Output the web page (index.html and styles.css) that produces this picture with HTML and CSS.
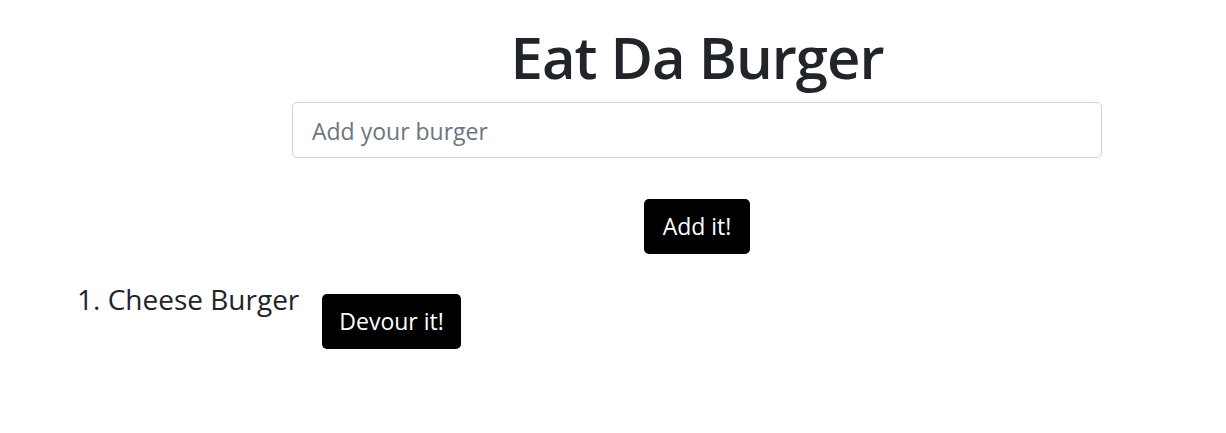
FILE: index.html
```html
<!DOCTYPE html>
<html lang="en">
<head>
<meta charset="utf-8">
<title>Eat Da Burger</title>
<link rel="stylesheet" href="styles.css">
</head>
<body>
<main class="page">
  <section class="form-area">
    <h1 class="title">Eat Da Burger</h1>
    <input class="burger-input" type="text" placeholder="Add your burger">
    <div class="add-row">
      <button class="btn" type="button">Add it!</button>
    </div>
  </section>
  <ol class="burger-list">
    <li class="burger-item">
      <span class="burger-name">1. Cheese Burger</span>
      <button class="btn btn-devour" type="button">Devour it!</button>
    </li>
  </ol>
</main>
</body>
</html>
```
FILE: styles.css
```css
* { box-sizing: border-box; }
html, body {
  margin: 0;
  padding: 0;
  background: #fff;
}
body {
  font-family: "Open Sans", "Noto Sans", "Liberation Sans", sans-serif;
  color: #212529;
}
.page {
  display: flex;
  flex-direction: column;
}
.form-area {
  margin-left: 292px;
  width: 810px;
  display: flex;
  flex-direction: column;
  align-items: center;
}
.title {
  margin: 18px 0 0;
  font-size: 58px;
  font-weight: 600;
  line-height: 78px;
  letter-spacing: -1px;
  text-align: center;
}
.burger-input {
  margin-top: 6px;
  width: 810px;
  height: 56px;
  padding: 2px 19px 0;
  border: 1px solid #ced4da;
  border-radius: 5px;
  font-family: inherit;
  font-size: 23px;
  color: #495057;
  outline: none;
}
.burger-input::placeholder {
  color: #6c757d;
}
.add-row {
  margin-top: 41px;
  display: flex;
  justify-content: center;
}
.btn {
  height: 55px;
  padding: 0 19px;
  border: none;
  border-radius: 5px;
  background: #000;
  color: #fff;
  font-family: inherit;
  font-size: 23px;
  line-height: 1;
  cursor: pointer;
}
.btn-devour {
  padding: 0 17px;
}
.burger-list {
  list-style: none;
  margin: 40px 0 0;
  padding: 0 0 0 77px;
}
.burger-item {
  display: flex;
  align-items: flex-start;
  gap: 23px;
}
.burger-name {
  font-size: 28px;
  line-height: 36px;
  margin-top: -13px;
}
```
